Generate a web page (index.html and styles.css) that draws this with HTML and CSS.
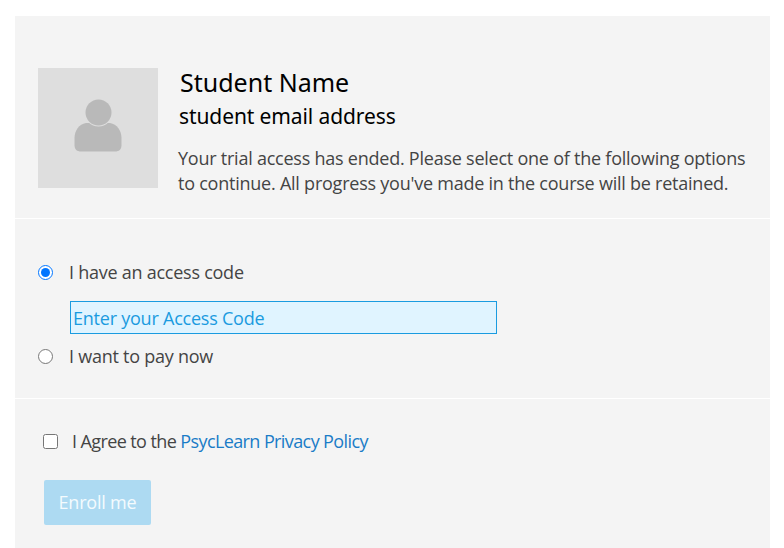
FILE: index.html
```
<!DOCTYPE html>
<html lang="en">
<head>
<meta charset="utf-8">
<title>Enroll</title>
<link rel="stylesheet" href="styles.css">
</head>
<body>
<main class="panel">
  <section class="profile">
    <div class="avatar">
      <svg class="avatar-icon" viewBox="0 0 48 53" width="48" height="53" aria-hidden="true">
        <path d="M12 24 C17 24 31 24 36 24 C43 25 47.500 32 47.500 39 L47.500 46 C47.500 50.500 45 52.500 41 52.500 L7 52.500 C3 52.500 .5 50.500 .5 46 L.5 39 C.5 32 5 25 12 24 Z" fill="#b9b9b9"/>
        <circle cx="24.500" cy="13.500" r="14" fill="#dedede"/>
        <circle cx="24.500" cy="13.500" r="13" fill="#b9b9b9"/>
      </svg>
    </div>
    <div class="info">
      <h1 class="name">Student Name</h1>
      <h2 class="email">student email address</h2>
      <p class="message">Your trial access has ended. Please select one of the following options to continue. All progress you've made in the course will be retained.</p>
    </div>
  </section>
  <section class="options">
    <label class="option"><input class="radio" type="radio" name="access" checked> I have an access code</label>
    <input class="code" type="text" placeholder="Enter your Access Code">
    <label class="option option-pay"><input class="radio" type="radio" name="access"> I want to pay now</label>
  </section>
  <section class="enroll">
    <label class="agree"><input class="check" type="checkbox"> <span>I Agree to the <a class="link" href="#">PsycLearn Privacy Policy</a></span></label>
    <button class="btn" type="button">Enroll me</button>
  </section>
</main>
</body>
</html>
```
FILE: styles.css
```
* { box-sizing: border-box; }
html, body { margin: 0; background: #fff; }
body { padding: 16px 14px 0 15px; height: 548px; overflow: hidden; font-family: "Open Sans", sans-serif; font-size: 18px; color: #444; }
.panel { background: #f4f4f4; height: 532px; }
.profile { display: flex; padding: 52px 15px 0 23px; height: 203px; border-bottom: 1px solid #fff; }
.avatar { flex: none; width: 120px; height: 120px; background: #dedede; display: flex; align-items: center; justify-content: center; }
.avatar-icon { margin-bottom: 5px; }
.info { margin-left: 20px; min-width: 0; }
.name { margin: -1px 0 0 2px; font-size: 25px; line-height: 30px; font-weight: 400; color: #000; font-family: "Noto Sans", sans-serif; }
.email { margin: 5px 0 0 1px; font-size: 21px; line-height: 28px; font-weight: 400; letter-spacing: -0.1px; color: #000; font-family: "Noto Sans", sans-serif; }
.message { margin: 16px 0 0; line-height: 25px; color: #444; letter-spacing: -0.235px; }
.options { padding: 41px 23px 0; height: 180px; border-bottom: 1px solid #fff; letter-spacing: -0.25px; }
.option { display: flex; align-items: center; gap: 16px; height: 25px; line-height: 25px; }
.radio { margin: 0; width: 15px; height: 15px; flex: none; }
.code { display: block; margin: 16px 0 10px 32px; width: 427px; height: 33px; padding: 0 2px; border: 1px solid #1a9be0; border-radius: 0; background: #e0f4ff; font: inherit; letter-spacing: -0.23px; color: #1a9be0; outline: 0; }
.code::placeholder { color: #1a9be0; opacity: 1; }
.enroll { padding: 29px 29px 0; }
.agree { display: flex; align-items: center; gap: 14px; height: 25px; margin-left: -1px; letter-spacing: -0.6px; }
.check { margin: 1px 0 0; width: 15px; height: 15px; flex: none; }
.link { color: #1a7cc7; text-decoration: none; }
.btn { display: block; margin-top: 27px; width: 107px; height: 45px; padding: 0 0 2px; border: 0; border-radius: 2px; background: #addaf2; color: #f4fbfe; font: inherit; letter-spacing: -0.2px; }
```
